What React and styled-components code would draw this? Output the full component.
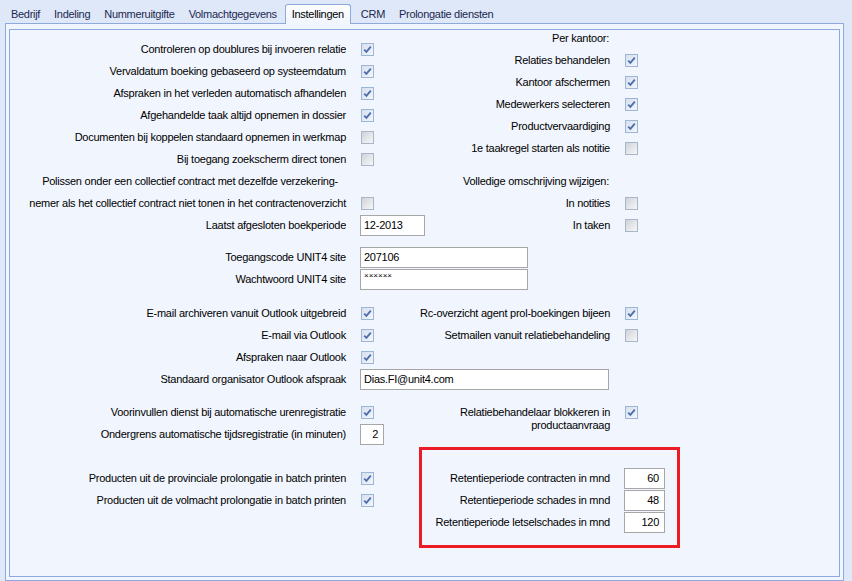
import React from "react"
import styled, { createGlobalStyle } from "styled-components"

const GlobalStyle = createGlobalStyle`
  html, body {
    margin: 0;
    padding: 0;
  }
  body {
    background: #dfe8f8;
    font-family: "Liberation Sans", Arial, sans-serif;
    font-size: 11px;
    letter-spacing: -0.25px;
    color: #000;
  }
`

const Window = styled.div`
  width: 852px;
  height: 581px;
  background: #dfe8f8;
  overflow: hidden;
`

const TabStrip = styled.ul`
  display: flex;
  align-items: flex-end;
  height: 23px;
  margin: 0;
  padding: 0 0 0 4px;
  list-style: none;
  box-sizing: border-box;
`

const Tab = styled.li`
  position: relative;
  z-index: 1;
  box-sizing: border-box;
  height: 20px;
  margin-bottom: -1px;
  padding: 0 6px;
  margin-left: ${p => (p.active ? 1 : 0)}px;
  margin-right: ${p => (p.active ? 3 : 0)}px;
  line-height: 18px;
  letter-spacing: -0.3px;
  color: #1a2850;
  border: 1px solid transparent;
  border-bottom: none;
  border-radius: 3px 3px 0 0;

  ${p =>
    p.active &&
    `
    border-color: #8eaadc;
    background: linear-gradient(#fdfeff, #f1f5fd);
    color: #000;
  `}
`

const Frame = styled.div`
  margin-left: 5px;
  width: 839px;
  height: 558px;
  box-sizing: border-box;
  border: 1px solid #8eaadc;
  background: #f1f5fd;
  padding: 5px 3px 3px 3px;
`

const Panel = styled.div`
  height: 100%;
  box-sizing: border-box;
  border: 1px solid #8eaadc;
  background: #f1f5fd;
  display: flex;
  flex-direction: column;
`

const Section = styled.div`
  display: flex;
  align-items: flex-start;
  margin-top: ${p => p.gap || 0}px;
`

const Column = styled.div`
  flex: 0 0 ${p => p.width}px;
  min-width: 0;
  padding-top: ${p => p.top || 0}px;
  display: flex;
  flex-direction: column;
  align-items: flex-start;
`

const Field = styled.div`
  display: grid;
  grid-template-columns: ${p => p.labelWidth}px auto;
  column-gap: 14px;
  align-items: ${p => (p.multiline ? "start" : "center")};
  height: ${p => (p.height ? `${p.height}px` : p.multiline ? "auto" : "22px")};
`

const Label = styled.span`
  text-align: right;
  white-space: nowrap;
  line-height: 13px;
  padding-right: ${p => p.inset || 0}px;
`

const Spacer = styled.div`
  height: ${p => p.size}px;
`

const Box = styled.span`
  display: inline-flex;
  align-items: center;
  justify-content: center;
  box-sizing: border-box;
  width: 13px;
  height: 13px;
  margin-left: 1px;
  border: 1px solid ${p => (p.checked ? "#9fb5d6" : "#a9b6c9")};
  background: ${p =>
    p.checked
      ? "linear-gradient(135deg, #d7e0ee 0%, #f3f6fb 100%)"
      : "linear-gradient(135deg, #cfd3d9 0%, #f7f7f7 100%)"};
`

const TextBox = styled.span`
  display: block;
  box-sizing: border-box;
  width: ${p => p.width}px;
  height: 21px;
  line-height: 19px;
  padding: 0 ${p => (p.right ? 5 : 3)}px 0 3px;
  text-align: ${p => (p.right ? "right" : "left")};
  background: #fff;
  border: 1px solid #a7a7a7;
  white-space: nowrap;
  overflow: hidden;
`

const Mask = styled.span`
  font-size: 8px;
  vertical-align: top;
  line-height: 12px;
  letter-spacing: 0;
`

const RedBox = styled.div`
  margin: 2px 0 0 45px;
  border: 3px solid #ed1c24;
  padding: 17px 12px 12px 0;
  display: flex;
  flex-direction: column;
`

const Check = ({ checked }) => (
  <Box checked={checked}>
    {checked && (
      <svg width="9" height="9" viewBox="0 0 9 9">
        <path
          d="M1.2 4.6 L3.4 6.8 L7.8 1.6"
          fill="none"
          stroke="#4f70ad"
          strokeWidth="1.9"
        />
      </svg>
    )}
  </Box>
)

const tabs = [
  "Bedrijf",
  "Indeling",
  "Nummeruitgifte",
  "Volmachtgegevens",
  "Instellingen",
  "CRM",
  "Prolongatie diensten",
]

const topLeft = [
  ["Controleren op doublures bij invoeren relatie", true],
  ["Vervaldatum boeking gebaseerd op systeemdatum", true],
  ["Afspraken in het verleden automatisch afhandelen", true],
  ["Afgehandelde taak altijd opnemen in dossier", true],
  ["Documenten bij koppelen standaard opnemen in werkmap", false],
  ["Bij toegang zoekscherm direct tonen", false],
]

const perKantoor = [
  ["Relaties behandelen", true],
  ["Kantoor afschermen", true],
  ["Medewerkers selecteren", true],
  ["Productvervaardiging", true],
  ["1e taakregel starten als notitie", false],
]

const retentie = [
  ["Retentieperiode contracten in mnd", "60"],
  ["Retentieperiode schades in mnd", "48"],
  ["Retentieperiode letselschades in mnd", "120"],
]

const L = 336
const R = 236

const CheckRow = ({ label, checked, width = L }) => (
  <Field labelWidth={width}>
    <Label>{label}</Label>
    <Check checked={checked} />
  </Field>
)

const App = () => {
  return (
    <Window>
      <GlobalStyle />
      <TabStrip>
        {tabs.map(t => (
          <Tab key={t} active={t === "Instellingen"}>
            {t}
          </Tab>
        ))}
      </TabStrip>
      <Frame>
        <Panel>
          <Section>
            <Column width={364} top={8}>
              {topLeft.map(([label, checked]) => (
                <CheckRow key={label} label={label} checked={checked} />
              ))}
              <Field labelWidth={L}>
                <Label inset={8}>
                  Polissen onder een collectief contract met dezelfde verzekering-
                </Label>
              </Field>
              <CheckRow
                label="nemer als het collectief contract niet tonen in het contractenoverzicht"
                checked={false}
              />
              <Field labelWidth={L}>
                <Label>Laatst afgesloten boekperiode</Label>
                <TextBox width={65}>12-2013</TextBox>
              </Field>
            </Column>
            <Column width={300}>
              <Field labelWidth={R} height={16}>
                <Label inset={1}>Per kantoor:</Label>
              </Field>
              <Spacer size={3} />
              {perKantoor.map(([label, checked]) => (
                <CheckRow key={label} label={label} checked={checked} width={R} />
              ))}
              <Spacer size={11} />
              <Field labelWidth={R}>
                <Label inset={1}>Volledige omschrijving wijzigen:</Label>
              </Field>
              <CheckRow label="In notities" checked={false} width={R} />
              <CheckRow label="In taken" checked={false} width={R} />
            </Column>
          </Section>

          <Section gap={10}>
            <Column width={364}>
              <Field labelWidth={L}>
                <Label>Toegangscode UNIT4 site</Label>
                <TextBox width={168}>207106</TextBox>
              </Field>
              <Field labelWidth={L}>
                <Label>Wachtwoord UNIT4 site</Label>
                <TextBox width={168}>
                  <Mask>××××××</Mask>
                </TextBox>
              </Field>
            </Column>
          </Section>

          <Section gap={12}>
            <Column width={364}>
              <CheckRow label="E-mail archiveren vanuit Outlook uitgebreid" checked />
              <CheckRow label="E-mail via Outlook" checked />
              <CheckRow label="Afspraken naar Outlook" checked />
              <Field labelWidth={L}>
                <Label>Standaard organisator Outlook afspraak</Label>
                <TextBox width={249}>Dias.FI@unit4.com</TextBox>
              </Field>
            </Column>
            <Column width={300}>
              <CheckRow
                label="Rc-overzicht agent prol-boekingen bijeen"
                checked
                width={R}
              />
              <CheckRow
                label="Setmailen vanuit relatiebehandeling"
                checked={false}
                width={R}
              />
            </Column>
          </Section>

          <Section gap={11}>
            <Column width={364}>
              <CheckRow
                label="Voorinvullen dienst bij automatische urenregistratie"
                checked
              />
              <Field labelWidth={L}>
                <Label>Ondergrens automatische tijdsregistratie (in minuten)</Label>
                <TextBox width={24} right>
                  2
                </TextBox>
              </Field>
            </Column>
            <Column width={300} top={5}>
              <Field labelWidth={R} multiline>
                <Label>
                  Relatiebehandelaar blokkeren in
                  <br />
                  productaanvraag
                </Label>
                <Check checked />
              </Field>
            </Column>
          </Section>

          <Section>
            <Column width={364} top={22}>
              <CheckRow
                label="Producten uit de provinciale prolongatie in batch printen"
                checked
              />
              <CheckRow
                label="Producten uit de volmacht prolongatie in batch printen"
                checked
              />
            </Column>
            <Column width={300}>
              <RedBox>
                {retentie.map(([label, value]) => (
                  <Field key={label} labelWidth={188}>
                    <Label>{label}</Label>
                    <TextBox width={41} right>
                      {value}
                    </TextBox>
                  </Field>
                ))}
              </RedBox>
            </Column>
          </Section>
        </Panel>
      </Frame>
    </Window>
  )
}

export default App
